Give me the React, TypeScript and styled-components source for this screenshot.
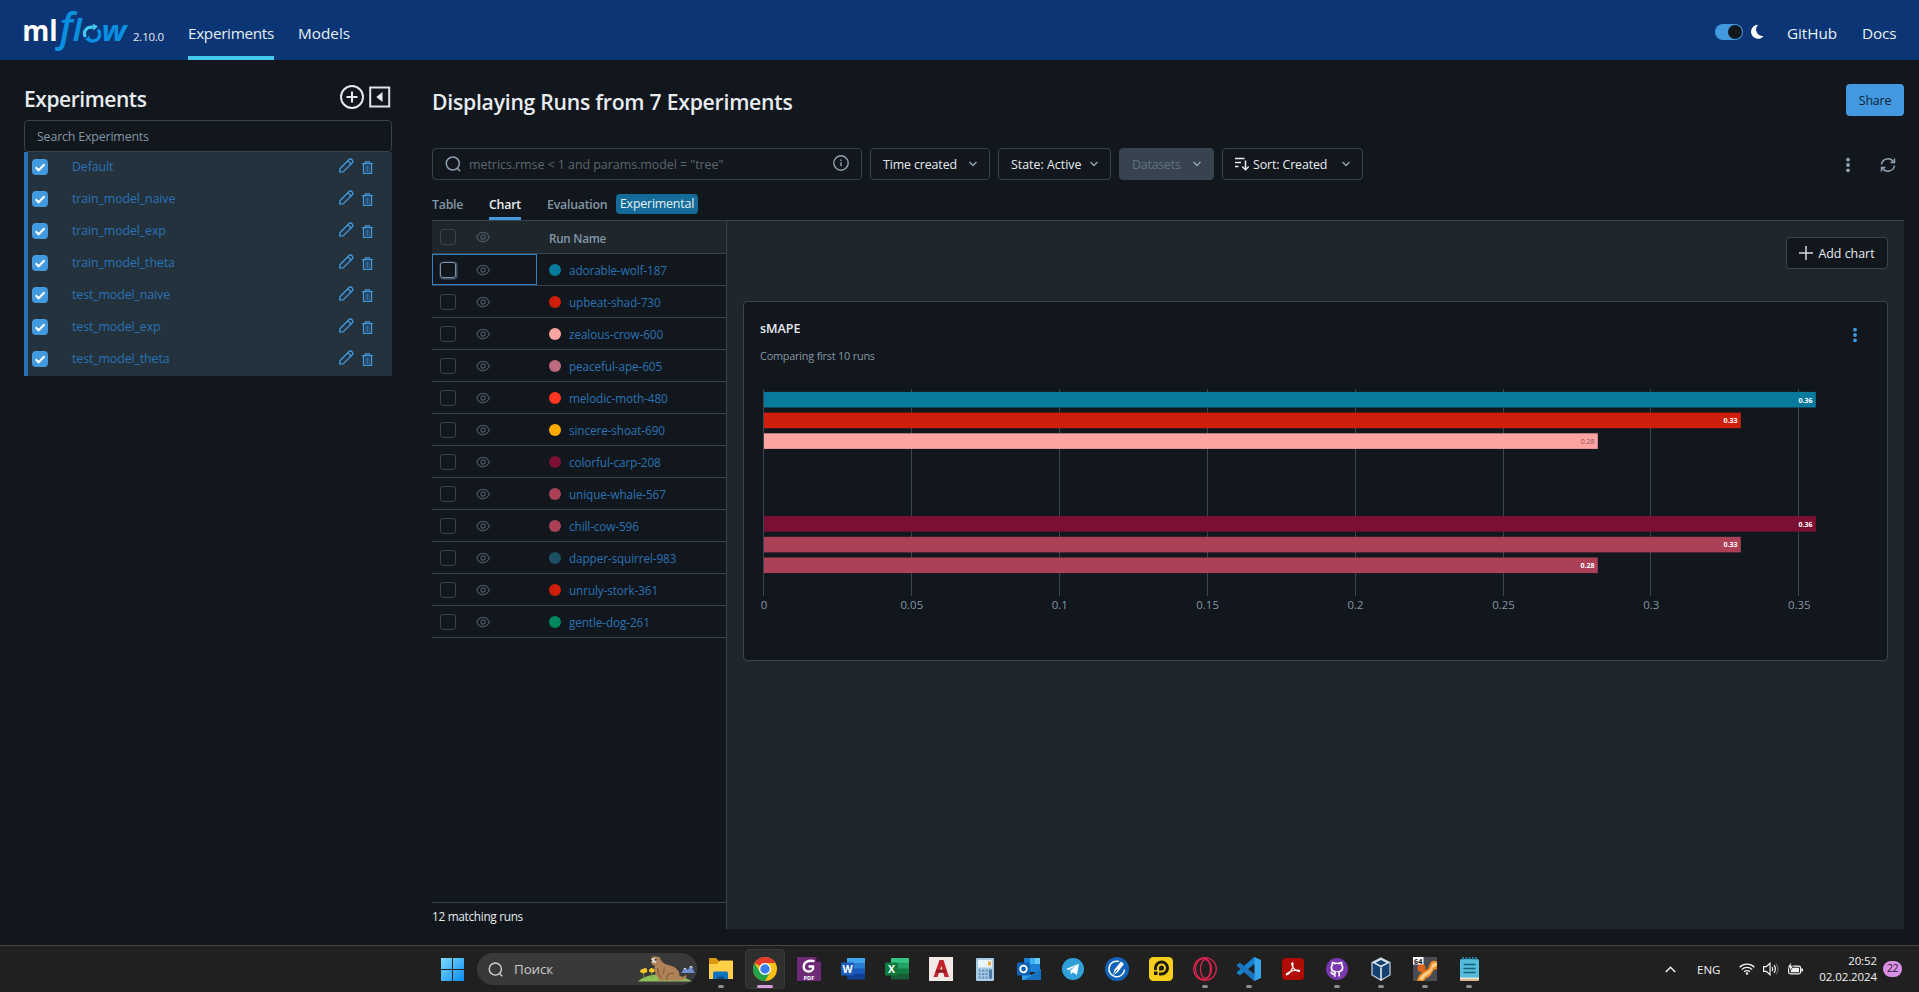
import React from 'react';
import styled, { createGlobalStyle, css } from 'styled-components';

const c = {
  page: '#11171c',
  panel: '#1f272d',
  border: '#37444f',
  nav: '#0b3574',
  link: '#2a72b5',
  blue: '#4299e0',
  muted: '#8396a5',
  text: '#e8ecf0',
};

const GlobalStyle = createGlobalStyle`
  * { box-sizing: border-box; }
  body { margin: 0; background: ${c.page}; overflow: hidden; }
  #root { font-family: "Open Sans", "Noto Sans", sans-serif; font-size: 12.4px; color: ${c.text}; }
  svg { display: block; flex: none; }
`;

const Screen = styled.div`
  width: 1919px;
  height: 992px;
  display: flex;
  flex-direction: column;
`;

/* ---------- top navigation ---------- */

const NavBar = styled.header`
  height: 60px;
  flex: none;
  background: ${c.nav};
  display: flex;
  align-items: stretch;
  padding: 0 23px 0 22px;
`;
const Version = styled.span`
  width: 32px;
  margin: 27px 23px 0 3px;
  font-size: 11.5px;
  line-height: 20px;
  letter-spacing: -0.23px;
  white-space: nowrap;
`;
const NavLink = styled.a<{ $active?: boolean; $track?: number; $width: number }>`
  width: ${(p) => p.$width}px;
  padding-top: 22px;
  line-height: 22px;
  font-size: 15.3px;
  letter-spacing: ${(p) => p.$track ?? 0}px;
  white-space: nowrap;
  color: #e6f1f5;
  border-bottom: 4px solid ${(p) => (p.$active ? '#43c9ed' : 'transparent')};
`;
const NavLinks = styled.nav`
  display: flex;
  gap: 24px;
`;
const NavRight = styled.div`
  margin-left: auto;
  display: flex;
  gap: 25px;
`;
const ThemeSwitch = styled.div`
  display: flex;
  gap: 8px;
  padding-top: 24px;
  margin-right: -2px;
`;
const Toggle = styled.span`
  width: 28px;
  height: 16px;
  border-radius: 8px;
  background: ${c.blue};
  display: flex;
  justify-content: flex-end;
  padding: 1px;
  &::after {
    content: '';
    width: 14px;
    height: 14px;
    border-radius: 50%;
    background: ${c.page};
  }
`;

/* ---------- page body ---------- */

const Body = styled.div`
  flex: 1;
  min-height: 0;
  display: flex;
  padding: 0 15px 0 24px;
`;
const Sidebar = styled.aside`
  width: 368px;
  margin-right: 40px;
  flex: none;
`;
const SidebarHead = styled.div`
  height: 60px;
  display: flex;
  align-items: flex-start;
  padding: 25px 1px 0 0;
  gap: 5px;
`;
const SidebarTitle = styled.h1`
  margin: 0 auto 0 0;
  font-size: 21px;
  line-height: 28px;
  font-weight: 600;
  letter-spacing: -0.45px;
`;
const SidebarSearch = styled.div`
  height: 32px;
  border: 1px solid ${c.border};
  border-radius: 4px;
  padding-left: 12px;
  line-height: 31px;
  letter-spacing: -0.17px;
  color: ${c.muted};
`;
const ExperimentList = styled.div`
  border-left: 4px solid #2272b4;
  background: #23323d;
`;
const ExperimentRow = styled.div`
  height: 32px;
  display: flex;
  align-items: center;
  padding: 0 19px 0 4px;
`;
const CheckedBox = styled.span`
  width: 16px;
  height: 16px;
  border-radius: 4px;
  background: ${c.blue};
  margin: 0 24px 2px 0;
`;
const ExperimentName = styled.a`
  flex: 1;
  line-height: 18px;
  padding-bottom: 3px;
  letter-spacing: -0.12px;
  color: ${c.link};
`;
const RowIcons = styled.span`
  display: flex;
  align-items: flex-end;
  gap: 8px;
  padding-bottom: 4px;
`;
const RaisedIcon = styled.span`
  padding-bottom: 1px;
`;

const Main = styled.main`
  flex: 1;
  min-width: 0;
  display: flex;
  flex-direction: column;
`;
const TitleRow = styled.div`
  height: 88px;
  flex: none;
  display: flex;
  justify-content: space-between;
  align-items: flex-start;
  padding-top: 24px;
`;
const Title = styled.h2`
  margin: 4px 0 0;
  font-size: 21.2px;
  line-height: 28px;
  font-weight: 600;
  letter-spacing: -0.25px;
`;
const ShareButton = styled.button`
  width: 58px;
  height: 32px;
  padding: 0;
  border: 0;
  border-radius: 4px;
  background: ${c.blue};
  color: #0f2233;
  font: inherit;
  letter-spacing: -0.18px;
`;
const Toolbar = styled.div`
  height: 32px;
  flex: none;
  display: flex;
  gap: 8px;
`;
const RunSearch = styled.div`
  width: 430px;
  flex: none;
  border: 1px solid ${c.border};
  border-radius: 4px;
  display: flex;
  align-items: center;
  padding: 0 12px;
  color: #5b666f;
  font-size: 12.5px;
  letter-spacing: -0.07px;
`;
const SearchHint = styled.span`
  flex: 1;
  margin-left: 8px;
`;
const FilterButton = styled.button<{ $width: number; $track?: number; $off?: boolean }>`
  width: ${(p) => p.$width}px;
  flex: none;
  padding: 0 11px 0 12px;
  border: 1px solid ${c.border};
  border-radius: 4px;
  background: transparent;
  color: ${c.text};
  font: inherit;
  font-size: 12.4px;
  letter-spacing: ${(p) => p.$track ?? 0}px;
  display: flex;
  align-items: center;
  justify-content: space-between;
  white-space: nowrap;
  ${(p) =>
    p.$off &&
    css`
      background: #37444f;
      color: #5f7281;
    `}
`;
const SortLabel = styled.span`
  display: flex;
  align-items: center;
  gap: 4px;
`;
const ToolbarEnd = styled.div`
  margin-left: auto;
  display: flex;
  align-items: center;
  gap: 30px;
  padding: 2px 8px 0 0;
`;
const Tabs = styled.div`
  height: 41px;
  flex: none;
  display: flex;
  align-items: flex-end;
  border-bottom: 1px solid ${c.border};
`;
const Tab = styled.div<{ $active?: boolean; $width: number }>`
  width: ${(p) => p.$width}px;
  height: 27px;
  margin-right: 26px;
  line-height: 23px;
  font-weight: 600;
  letter-spacing: -0.26px;
  white-space: nowrap;
  color: ${(p) => (p.$active ? c.text : c.muted)};
  border-bottom: 3px solid ${(p) => (p.$active ? c.blue : 'transparent')};
`;
const ExperimentalTag = styled.span`
  width: 82px;
  height: 20px;
  margin: 0 0 6px -18px;
  border-radius: 4px;
  background: #136c98;
  color: #e6f1f5;
  line-height: 20px;
  text-align: center;
  letter-spacing: -0.2px;
`;

/* ---------- runs table ---------- */

const Split = styled.div`
  flex: 1;
  min-height: 0;
  display: flex;
`;
const RunsPanel = styled.section`
  width: 295px;
  flex: none;
  display: flex;
  flex-direction: column;
  border-right: 1px solid ${c.border};
`;
const RunsHead = styled.div`
  height: 33px;
  flex: none;
  background: ${c.panel};
  border-bottom: 1px solid ${c.border};
  display: flex;
`;
const RunRow = styled.div`
  height: 32px;
  flex: none;
  border-bottom: 1px solid ${c.border};
  display: flex;
`;
const SelectCell = styled.div<{ $focused?: boolean }>`
  width: 105px;
  display: flex;
  align-items: center;
  gap: 20px;
  padding-left: 7px;
  border: 1px solid ${(p) => (p.$focused ? '#2f83c5' : 'transparent')};
`;
const EmptyBox = styled.span<{ $focused?: boolean }>`
  width: 16px;
  height: 16px;
  border-radius: 3px;
  border: 1px solid ${(p) => (p.$focused ? '#7d93a5' : c.border)};
  ${(p) => p.$focused && 'box-shadow: 0.5px 0.5px 0 1px #3f566a;'}
`;
const NameCell = styled.div`
  display: flex;
  align-items: center;
  padding-left: 12px;
  font-size: 11.8px;
  letter-spacing: -0.13px;
  color: ${c.link};
`;
const RunLabel = styled.a`
  padding-top: 1px;
`;
const NameHeader = styled.div`
  padding-left: 12px;
  line-height: 34px;
  font-size: 11.7px;
  font-weight: 600;
  letter-spacing: -0.27px;
  color: ${c.muted};
`;
const RunDot = styled.span<{ $color: string }>`
  width: 12px;
  height: 12px;
  margin: 0 8px 0 0;
  border-radius: 50%;
  background: ${(p) => p.$color};
`;
const RunsFooter = styled.div`
  margin-top: auto;
  height: 27px;
  border-top: 1px solid ${c.border};
  line-height: 27px;
  font-size: 11.8px;
  font-weight: 500;
  letter-spacing: -0.3px;
`;

/* ---------- chart area ---------- */

const ChartArea = styled.section`
  flex: 1;
  background: ${c.panel};
  padding: 16px 16px 0;
  display: flex;
  flex-direction: column;
`;
const AddChartButton = styled.button`
  align-self: flex-end;
  width: 102px;
  height: 32px;
  flex: none;
  margin-bottom: 32px;
  border: 1px solid ${c.border};
  border-radius: 4px;
  background: ${c.page};
  color: ${c.text};
  font: inherit;
  display: flex;
  align-items: center;
  justify-content: center;
  gap: 5px;
  padding: 0;
  white-space: nowrap;
`;
const ChartCard = styled.article`
  height: 360px;
  background: ${c.page};
  border: 1px solid ${c.border};
  border-radius: 4px;
  padding: 17px 30px 0 16px;
`;
const CardHead = styled.div`
  display: flex;
  justify-content: space-between;
  height: 57px;
`;
const CardTitle = styled.h3`
  margin: 0;
  font-size: 12.5px;
  line-height: 20px;
  font-weight: 600;
`;
const CardSubtitle = styled.div`
  margin-top: 8px;
  font-size: 10.9px;
  line-height: 18px;
  letter-spacing: -0.22px;
  color: ${c.muted};
`;
const MenuButton = styled.span`
  padding-top: 8px;
`;

/* ---------- task bar ---------- */

const PageFooterGap = styled.div`
  height: 16px;
  flex: none;
`;
const TaskBar = styled.footer`
  height: 47px;
  flex: none;
  display: grid;
  grid-template-columns: 441px 1fr auto;
  border-top: 1px solid #474541;
  background: #202020;
`;
const TaskIcons = styled.div`
  grid-column: 2;
  display: flex;
  align-items: center;
`;
const TaskSearch = styled.div`
  width: 220px;
  height: 32px;
  margin: 0 2px 0 13px;
  border-radius: 16px;
  background: #393939;
  display: flex;
  align-items: center;
  padding: 0 2px 0 11px;
  font-size: 13.4px;
  letter-spacing: -0.1px;
  color: #c9c9c9;
`;
const TaskSearchText = styled.span`
  margin: 0 auto 0 11px;
`;
const TaskSlot = styled.div<{ $active?: boolean }>`
  position: relative;
  width: 40px;
  height: 40px;
  margin: 0 2px;
  border-radius: 4px;
  display: flex;
  align-items: center;
  justify-content: center;
  ${(p) =>
    p.$active &&
    css`
      background: #2f2f2f;
      border: 1px solid #3a3a3a;
    `}
`;
const RunningMark = styled.span<{ $wide?: boolean }>`
  position: absolute;
  bottom: ${(p) => (p.$wide ? 0 : 1)}px;
  width: ${(p) => (p.$wide ? 16 : 6)}px;
  height: 3px;
  border-radius: 2px;
  background: ${(p) => (p.$wide ? '#d99be0' : '#8e8e8e')};
`;
const Tray = styled.div`
  display: flex;
  align-items: center;
  padding-right: 17px;
  font-size: 11.5px;
  color: #f2f2f2;
`;
const TrayLang = styled.span`
  width: 24px;
  margin: 1px 18px 0 21px;
`;
const TrayIcons = styled.div`
  display: flex;
  align-items: center;
  gap: 8px;
  margin-right: 15px;
`;
const Clock = styled.div`
  width: 59px;
  text-align: right;
  line-height: 16px;
  letter-spacing: -0.1px;
`;
const NoticeBadge = styled.span`
  width: 19px;
  height: 16px;
  margin-left: 6px;
  border-radius: 8px;
  background: #d98fe3;
  color: #2a1a2c;
  font-size: 10.5px;
  line-height: 15px;
  letter-spacing: -0.4px;
  text-align: center;
`;

/* ---------- icons ---------- */

const Logo = () => (
  <svg width="108" height="60" viewBox="0 0 108 60" fontFamily="Open Sans, sans-serif">
    <text x="0.2" y="41" fontSize="29" fontWeight="700" fill="#fff" textLength="35.5" lengthAdjust="spacingAndGlyphs">ml</text>
    <g fill="#0b8fe0" fontStyle="italic">
      <text x="37.500" y="40.500" fontSize="39" fontWeight="600">f</text>
      <text x="50.800" y="41" fontSize="30" fontWeight="700">l</text>
      <text x="79.500" y="41" fontSize="29" fontWeight="700" textLength="25" lengthAdjust="spacingAndGlyphs">w</text>
    </g>
    <path d="M75.800 29.500A6.500 6.500 0 0 1 66 39" fill="none" stroke="#0b8fe0" strokeWidth="3.400" />
    <path d="M63.400 37A6.500 6.500 0 0 1 71 27.500" fill="none" stroke="#43c9ed" strokeWidth="3.200" />
    <path d="m70.500 23.800 5.500 2.400-4.500 4.200Z" fill="#43c9ed" />
    <path d="m68.500 42-5.500-2.400 4.500-4.200Z" fill="#0b8fe0" />
  </svg>
);
const Moon = () => (
  <svg width="13" height="15" viewBox="0 0 13 15">
    <path d="M7.200.7A7 7 0 1 0 12.600 12 6.600 6.600 0 0 1 7.200.7Z" fill="#fff" />
  </svg>
);
const PlusCircle = () => (
  <svg width="24" height="24" viewBox="0 0 24 24" fill="none" stroke="#e8ecf0">
    <circle cx="12" cy="12" r="11" strokeWidth="1.900" />
    <path d="M12 6.500v11M6.500 12h11" strokeWidth="2" />
  </svg>
);
const CollapseBox = () => (
  <svg width="22" height="24" viewBox="0 0 22 24">
    <rect x="1.200" y="2.500" width="19" height="19" fill="none" stroke="#dfe3e7" strokeWidth="2" />
    <path d="M13.500 7v10L7.300 12Z" fill="#e8ecf0" />
  </svg>
);
const Check = () => (
  <svg width="16" height="16" viewBox="0 0 16 16">
    <path d="m3.600 8.200 3.100 3.100 5.800-6" fill="none" stroke="#fff" strokeWidth="2" />
  </svg>
);
const Pencil = () => (
  <svg width="15" height="15" viewBox="0 0 15 15" fill="none" stroke={c.blue} strokeWidth="1.400">
    <path d="M.9 14.100v-3.400l8.900-8.900a2 2 0 0 1 3.200 0 2 2 0 0 1 0 3.200l-8.900 8.900Z" />
    <path d="m9.300 3.200 2.800 2.800" />
  </svg>
);
const Trash = () => (
  <svg width="11" height="13" viewBox="0 0 11 13" fill="none" stroke={c.blue}>
    <path d="M0 2.700h11M3.300 2.500V.9h4.400v1.600" strokeWidth="1.200" />
    <path d="M1.500 3v9.300h8V3" strokeWidth="1.300" />
    <path d="M4 4.500v6.500M5.500 4.500v6.500M7 4.500v6.500" stroke="#3579b5" strokeWidth=".9" />
  </svg>
);
const Magnifier = ({ color = '#8fa1b0', size = 16 }: { color?: string; size?: number }) => (
  <svg width={size} height={size} viewBox="0 0 16 16" fill="none" stroke={color} strokeWidth="1.500">
    <circle cx="7.800" cy="7.500" r="6.500" />
    <path d="m12.200 12.200 3 3" />
  </svg>
);
const Info = () => (
  <svg width="16" height="18" viewBox="0 0 16 18" fill="none" stroke="#8fa1b0" strokeWidth="1.400">
    <circle cx="8" cy="8" r="7.200" />
    <path d="M8 7.300v4M8 4.600v1.500" />
  </svg>
);
const ChevronDown = () => (
  <svg width="10" height="6" viewBox="0 0 10 6" fill="none" stroke="#8fa1b0" strokeWidth="1.500">
    <path d="m1.500 1 3.500 3.500L8.500 1" />
  </svg>
);
const SortIcon = () => (
  <svg width="14" height="14" viewBox="0 0 14 14" fill="none" stroke={c.text} strokeWidth="1.500">
    <path d="M0 1.500h9.500M0 5.500h6M0 9.500h3.500M10.500 3.500v9M7.200 9.500l3.300 3.200 3.300-3.200" />
  </svg>
);
const Dots = ({ color }: { color: string }) => (
  <svg width="4" height="16" viewBox="0 0 4 16" fill={color}>
    <circle cx="2" cy="2.700" r="1.900" />
    <circle cx="2" cy="8" r="1.900" />
    <circle cx="2" cy="13.300" r="1.900" />
  </svg>
);
const Refresh = () => (
  <svg width="16" height="16" viewBox="0 0 16 16" fill="none" stroke="#8fa1b0" strokeWidth="1.500">
    <path d="M1.500 7.500A6.500 6.500 0 0 1 13.500 5M14.500 8.500A6.500 6.500 0 0 1 2.500 11" />
    <path d="M14.500 1.500V5.500h-4M1.500 14.500v-4h4" />
  </svg>
);
const Eye = () => (
  <svg width="14" height="12" viewBox="0 0 14 12" fill="none" stroke="#46545f" strokeWidth="1.300">
    <path d="M.7 6C3.300-.3 10.700-.3 13.300 6 10.700 12.300 3.300 12.300.7 6Z" />
    <circle cx="7" cy="6" r="2.100" />
  </svg>
);
const Plus = () => (
  <svg width="14" height="14" viewBox="0 0 14 14" stroke="#d3dae0" strokeWidth="1.500">
    <path d="M7 0v14M0 7h14" />
  </svg>
);

/* ---------- chart ---------- */

const bars = [
  { y: 16.5, width: 1053, color: '#077a9d', label: '0.36' },
  { y: 37.2, width: 978, color: '#cf1f0c', label: '0.33' },
  { y: 57.9, width: 835, color: '#fba4a2', label: '0.28', dim: true },
  { y: 140.7, width: 1053, color: '#7c1033', label: '0.36' },
  { y: 161.4, width: 978, color: '#ab4057', label: '0.33' },
  { y: 182.1, width: 835, color: '#ab4057', label: '0.28' },
];
const ticks = ['0', '0.05', '0.1', '0.15', '0.2', '0.25', '0.3', '0.35'];

const BarChart = () => (
  <svg width="1080" height="250" viewBox="0 0 1080 250" fontFamily="Open Sans, sans-serif">
    {ticks.map((t, i) => (
      <g key={t}>
        <rect x={Math.round(3.1 + i * 147.88)} y="13" width="1" height="207" fill="#3a4651" />
        <text x={4 + i * 147.88} y="232.500" fontSize="11.400" fill="#8396a5" textAnchor="middle">{t}</text>
      </g>
    ))}
    {bars.map((b) => (
      <g key={b.y}>
        <rect x="4" y={b.y - 0.6} width={b.width - 1.2} height="15.600" fill={b.color} />
        <text x={b.width - 0.5} y={b.y + 10} fontSize="7" fontWeight={b.dim ? 400 : 700} fill={b.dim ? '#8a5053' : '#fff'} textAnchor="end">{b.label}</text>
      </g>
    ))}
  </svg>
);

/* ---------- task bar icons ---------- */

const Windows = () => (
  <svg width="23" height="23" viewBox="0 0 23 23">
    <defs>
      <linearGradient id="win" x1="0" y1="0" x2="1" y2="1">
        <stop offset="0" stopColor="#7fdcff" />
        <stop offset="1" stopColor="#0a8cf0" />
      </linearGradient>
    </defs>
    <path d="M0 0h11v11H0zM12 0h11v11H12zM0 12h11v11H0zM12 12h11v11H12z" fill="url(#win)" />
  </svg>
);
const Marmot = () => (
  <svg width="57" height="26" viewBox="0 0 57 26">
    <path d="M0 25.500C8 18 24 17 34 19c9 1 15 3 20 6.500Z" fill="#8fbf5a" />
    <path d="m43 17 4-5 2.500 2 3.500-4 4 7Z" fill="#6f8fd0" />
    <path d="m45.500 13.500 1.500-1.500 1.500 1.200M51.500 11.500l1.500-1.500 1.500 2" stroke="#dfe8fa" fill="none" />
    <path d="M2 15.500q0-3 3-2.500 3-2 4 .5 1 3-2 3.500-4 1-5-1.500ZM11 14q2-3 4-1.500 2.500.5 1.500 3-2 2-4 .8Q10.500 16 11 14Z" fill="#f1c62b" />
    <path d="M5.500 17v4M13.500 17v4" stroke="#6d9a3c" />
    <path d="M13 3c.5-2.500 4-3.500 6.500-2 1.500-.8 2.500 0 2.500 1.500 2 4.500 5 5.500 10 7 7 2 10 6 9.500 11 3 1 5 0 6.500-2 1.500 3-1.500 6-6.500 6H22c-2.500 0-2.500-1.500-1-2.500-4-2-4.500-7-4.500-12.500-2-.5-3.500-1.500-3.500-4.500Z" fill="#b08257" />
    <path d="M19.500 12c0 5 2 8 3.500 10M29 24c-1-5 3-8 7-6.500M26 11c1 3 0 5-1 7" stroke="#876040" strokeWidth="1.200" fill="none" />
    <path d="M13 3.500c1.500-2 4-2 6-.5l-1 4c-2.500.5-4.500-.5-5-3.500Z" fill="#d9cdc4" />
    <circle cx="17.800" cy="3.800" r="1" fill="#222" />
    <circle cx="13.200" cy="4.500" r=".8" fill="#222" />
  </svg>
);
const Explorer = () => (
  <svg width="24" height="24" viewBox="0 0 24 24">
    <path d="M0 2q0-1 1-1h6l3 3v6H0Z" fill="#d99a0b" />
    <path d="M0 7h8l3-3.500h12q1 0 1 1V22H0Z" fill="#ffcf48" />
    <path d="M4 22v-6q0-1.500 1.500-1.500h12q1.500 0 1.500 1.500v6Z" fill="#1173bd" />
    <path d="M8 22v-2.500h7V22Z" fill="#0a4f8c" />
  </svg>
);
const Chrome = () => (
  <svg width="24" height="24" viewBox="0 0 24 24">
    <circle cx="12" cy="12" r="12" fill="#fbc116" />
    <path d="M12 12 1.600 6A12 12 0 0 1 22.400 6H12Z" fill="#e33b2e" />
    <path d="M1.600 6A12 12 0 0 0 12 24l5.200-9H6.800Z" fill="#25a34a" />
    <circle cx="12" cy="12" r="6" fill="#fff" />
    <circle cx="12" cy="12" r="4.700" fill="#3a7df0" />
  </svg>
);
const FoxitPdf = () => (
  <svg width="24" height="24" viewBox="0 0 24 24">
    <path d="M0 0h19l5 5v19H0Z" fill="#6f2a76" />
    <path d="M19 0v5h5Z" fill="#3f1744" />
    <path d="M17.500 4.200c-6.500-1.500-10.800 1-10.800 5.500 0 5 6.800 6.500 9.300 2.300V9.500h-4.500" fill="none" stroke="#fff" strokeWidth="2.400" />
    <text x="12" y="22.500" fontSize="5.800" fontWeight="700" fill="#fff" textAnchor="middle">PDF</text>
  </svg>
);
const OfficeIcon = ({ letter, shades }: { letter: string; shades: string[] }) => (
  <svg width="24" height="22" viewBox="0 0 24 22">
    {shades.slice(0, 4).map((s, i) => (
      <rect key={s} x="6" y={i * 5.3} width="18" height="5.600" fill={s} />
    ))}
    <rect y="4.500" width="13" height="13" rx="1" fill={shades[4]} />
    <text x="6.500" y="14.700" fontSize="10.500" fontWeight="700" fill="#fff" textAnchor="middle">{letter}</text>
  </svg>
);
const AutoCad = () => (
  <svg width="24" height="24" viewBox="0 0 24 24">
    <rect width="24" height="24" fill="#f3e9e6" />
    <path d="M4.500 20 10.500 3h4L20 20h-4.500l-3-11-4 11Z" fill="#c2262c" />
    <path d="M7.500 12.500h9v3.200h-10Z" fill="#8f1a20" />
  </svg>
);
const Calculator = () => (
  <svg width="18" height="23" viewBox="0 0 18 23">
    <rect width="18" height="23" rx="1" fill="#a9cbe6" />
    <rect x="2" y="2" width="14" height="7.500" fill="#e9f3fa" />
    <path d="M12 3.500h3v4h-3Z" fill="#e6a93a" />
    <g fill="#6d97bf">
      {[11.5, 15, 18.5].map((y) =>
        [2.5, 6, 9.5].map((x) => <rect key={`${x}-${y}`} x={x} y={y} width="2.300" height="2.200" />),
      )}
    </g>
    <rect x="13" y="11.500" width="3" height="9.200" fill="#4b79a5" />
  </svg>
);
const Outlook = () => (
  <svg width="24" height="22" viewBox="0 0 24 22">
    <path d="M7 0h16v14H7Z" fill="#1b7fd6" />
    <path d="M13 0h5v6h-5Z" fill="#3fb0f0" />
    <path d="M18 0h5v6h-5Z" fill="#68ccfa" />
    <path d="M5 11l9.500 6L24 11v11H5Z" fill="#2c9fe8" />
    <path d="m24 11-17 11h17Z" fill="#1673c4" />
    <rect y="4.500" width="13" height="13" rx="1" fill="#0f63b5" />
    <circle cx="6.500" cy="11" r="3.300" fill="none" stroke="#fff" strokeWidth="1.800" />
  </svg>
);
const Telegram = () => (
  <svg width="22" height="22" viewBox="0 0 22 22">
    <circle cx="11" cy="11" r="11" fill="#31a0d8" />
    <path d="M4 11 17 5.700 14.900 17l-4-2.800-2 2-.6-3.700 5.500-4.700-7 4.200Z" fill="#fff" />
  </svg>
);
const SignApp = () => (
  <svg width="24" height="24" viewBox="0 0 24 24">
    <circle cx="12" cy="12" r="12" fill="#1162b8" />
    <path d="M14 4.500a7.800 7.800 0 1 0 5.500 8" fill="none" stroke="#fff" strokeWidth="1.500" />
    <path d="m8 18 1.500-5.500 6.500-8 3 2.500-6.500 8.500Z" fill="#fff" />
    <path d="m8.500 17.300 4-5" stroke="#1162b8" />
  </svg>
);
const PlayerIcon = () => (
  <svg width="24" height="24" viewBox="0 0 24 24">
    <rect width="24" height="24" rx="4.500" fill="#f7cf1b" />
    <path d="M6.500 13v-2a6 6 0 1 1 6 6H10" fill="none" stroke="#1d1b12" strokeWidth="3" />
    <path d="M5 14.500h3.500V18H5Z" fill="#1d1b12" />
    <path d="M10 13.500V11a2.500 2.500 0 1 1 2.500 2.500Z" fill="#1d1b12" />
  </svg>
);
const OperaGx = () => (
  <svg width="24" height="24" viewBox="0 0 24 24" fill="none" stroke="#dd2450" strokeWidth="1.300">
    <circle cx="12" cy="12" r="11.300" />
    <ellipse cx="10.500" cy="12" rx="8" ry="10.500" />
    <ellipse cx="12.500" cy="12" rx="5" ry="9.300" />
  </svg>
);
const VsCode = () => (
  <svg width="24" height="24" viewBox="0 0 24 24">
    <path d="M18 0v6.500L3 18.200 0 16.500V15L16.500.5Z" fill="#1681cc" />
    <path d="M18 24v-6.500L3 5.800 0 7.500V9l16.500 14.500Z" fill="#1c75bb" />
    <path d="m17.500 0 6.500 3v18l-6.500 3Z" fill="#34a5ee" />
  </svg>
);
const Acrobat = () => (
  <svg width="22" height="22" viewBox="0 0 22 22">
    <rect width="22" height="22" rx="4" fill="#ae0c04" />
    <path d="M5 16.800c3-1 6.500-7 6-11.300 0-1-1.300-1-1.300.2.300 3.500 3.800 7.800 7 7.800 1.200 0 1.200-1.200 0-1.300-4-.2-9 1.300-12 3.500-.8.700-.3 1.300.3 1.100Z" fill="none" stroke="#fff" strokeWidth="1.200" />
  </svg>
);
const GitHubDesktop = () => (
  <svg width="22" height="22" viewBox="0 0 22 22">
    <circle cx="11" cy="11" r="11" fill="#7a37ad" />
    <path d="M8.800 18.700v-2.400c-2.800.4-2.800-1.800-4.300-2.200M8.800 18.500v-3.200c0-.6.200-1.100.6-1.500-2.500-.3-4-1.500-4-4.300 0-1 .4-1.900 1-2.500-.3-.9-.2-1.700.1-2.500 1 0 1.800.5 2.500 1a9 9 0 0 1 4 0c.700-.5 1.500-1 2.500-1 .3.800.4 1.600.1 2.500.6.600 1 1.500 1 2.500 0 2.800-1.500 4-4 4.300.4.400.6.900.6 1.500v3.200" fill="none" stroke="#fff" strokeWidth="1.700" />
  </svg>
);
const VirtualBox = () => (
  <svg width="20" height="24" viewBox="0 0 20 24">
    <path d="m10 1 9 4.500v12.500L10 23.200 1 18V5.500Z" fill="#16406f" stroke="#c6d6e6" strokeWidth="1.200" />
    <path d="m10 1 9 4.500-9 5-9-5Z" fill="#d5e1ec" />
    <path d="m10 3 5.500 2.700L10 8.500 4.500 5.700Z" fill="#16406f" />
    <path d="M10 10.500v12.700" stroke="#e4edf5" strokeWidth="1.600" />
  </svg>
);
const Sixty4 = () => (
  <svg width="24" height="24" viewBox="0 0 24 24">
    <rect width="24" height="24" fill="#4a4c54" />
    <path d="M4 24c1-6 5-9 9-11s3-6 5-8 4-1 6-1v8c-5 0-4 4-7 7-3 2-5 2-6 5Z" fill="#f08a24" />
    <path d="M6 23c2-5 5-7 9-9s3-6 5-7.500 2-.5 4-.5v3c-5 0-4 4-7 7s-6 3-7 7Z" fill="#ffd08a" />
    <circle cx="8.500" cy="11" r="4" fill="#e0621a" />
    <rect width="10.500" height="7.500" fill="#fff" />
    <text x="5.200" y="6.500" fontSize="7.300" fontWeight="700" fill="#111" textAnchor="middle">64</text>
  </svg>
);
const Notepad = () => (
  <svg width="19" height="24" viewBox="0 0 19 24">
    <rect y="2" width="19" height="20" rx="1.500" fill="#55bddb" />
    <path d="M0 20.500h19V22.500q0 1.500-1.500 1.500h-16Q0 24 0 22.500Z" fill="#e9e4dc" />
    <path d="M.5 23h18" stroke="#d98a3b" />
    <path d="M3 0v3M6.300 0v3M9.500 0v3M12.800 0v3M16 0v3" stroke="#2b8fb5" strokeWidth="1.500" />
    <path d="M3.500 7.500h12M3.500 11.500h12M3.500 15.500h12" stroke="#16607c" strokeWidth="1.600" />
  </svg>
);

const ChevronUp = () => (
  <svg width="11" height="7" viewBox="0 0 11 7" fill="none" stroke="#f2f2f2" strokeWidth="1.500">
    <path d="M.8 6 5.500 1.300 10.200 6" />
  </svg>
);
const Wifi = () => (
  <svg width="16" height="12" viewBox="0 0 16 12" fill="none" stroke="#f2f2f2" strokeWidth="1.300">
    <path d="M.6 4.300a10.400 10.400 0 0 1 14.800 0M2.800 6.600a7.300 7.300 0 0 1 10.400 0M5 8.900a4.200 4.200 0 0 1 6 0" />
    <circle cx="8" cy="10.500" r="1.200" fill="#f2f2f2" stroke="none" />
  </svg>
);
const Speaker = () => (
  <svg width="16" height="14" viewBox="0 0 16 14" fill="none" stroke="#f2f2f2" strokeWidth="1.200">
    <path d="M.6 4.700h2.700L7 1.200v11.600L3.300 9.300H.6ZM9 5q1.300 2 0 4M11 3.200q2.800 3.800 0 7.600" />
    <path d="M13 1.500q4 5.500 0 11" stroke="#666" />
  </svg>
);
const Battery = () => (
  <svg width="16" height="14" viewBox="0 0 16 14">
    <rect x="1.600" y="4.100" width="12" height="7.800" rx="1.800" fill="none" stroke="#f2f2f2" strokeWidth="1.200" />
    <path d="M4.500 5.700h7.500v4.600H3.500Z" fill="#f2f2f2" />
    <path d="M14.300 6.500H16v3h-1.700Z" fill="#f2f2f2" />
    <path d="M4 0 .3 5.800h2.400v3.800L6.500 4H4.300Z" fill="#f2f2f2" stroke="#202020" strokeWidth=".7" />
  </svg>
);

const apps: { icon: React.ReactNode; running?: boolean; active?: boolean }[] = [
  { icon: <Explorer />, running: true },
  { icon: <Chrome />, active: true },
  { icon: <FoxitPdf /> },
  { icon: <OfficeIcon letter="W" shades={['#41a5ee', '#2b7cd3', '#185abd', '#103f91', '#1a5dbe']} /> },
  { icon: <OfficeIcon letter="X" shades={['#33c481', '#21a366', '#107c41', '#185c37', '#0f7a40']} /> },
  { icon: <AutoCad /> },
  { icon: <Calculator /> },
  { icon: <Outlook /> },
  { icon: <Telegram /> },
  { icon: <SignApp /> },
  { icon: <PlayerIcon /> },
  { icon: <OperaGx />, running: true },
  { icon: <VsCode />, running: true },
  { icon: <Acrobat /> },
  { icon: <GitHubDesktop />, running: true },
  { icon: <VirtualBox />, running: true },
  { icon: <Sixty4 />, running: true },
  { icon: <Notepad />, running: true },
];

const experiments = [
  'Default',
  'train_model_naive',
  'train_model_exp',
  'train_model_theta',
  'test_model_naive',
  'test_model_exp',
  'test_model_theta',
];

const runs: [string, string][] = [
  ['adorable-wolf-187', '#077a9d'],
  ['upbeat-shad-730', '#cf1f0c'],
  ['zealous-crow-600', '#fba4a2'],
  ['peaceful-ape-605', '#bc6a7c'],
  ['melodic-moth-480', '#ff3621'],
  ['sincere-shoat-690', '#ffab00'],
  ['colorful-carp-208', '#7c1033'],
  ['unique-whale-567', '#ab4057'],
  ['chill-cow-596', '#ab4057'],
  ['dapper-squirrel-983', '#1b5162'],
  ['unruly-stork-361', '#cf1f0c'],
  ['gentle-dog-261', '#00875c'],
];

export default function App() {
  return (
    <Screen>
      <GlobalStyle />
      <NavBar>
        <Logo />
        <Version>2.10.0</Version>
        <NavLinks>
          <NavLink $active $width={86} $track={-0.32}>Experiments</NavLink>
          <NavLink $width={52}>Models</NavLink>
        </NavLinks>
        <NavRight>
          <ThemeSwitch>
            <Toggle />
            <Moon />
          </ThemeSwitch>
          <NavLink $width={50} $track={-0.08}>GitHub</NavLink>
          <NavLink $width={34} $track={-0.1}>Docs</NavLink>
        </NavRight>
      </NavBar>

      <Body>
        <Sidebar>
          <SidebarHead>
            <SidebarTitle>Experiments</SidebarTitle>
            <PlusCircle />
            <CollapseBox />
          </SidebarHead>
          <SidebarSearch>Search Experiments</SidebarSearch>
          <ExperimentList>
            {experiments.map((name) => (
              <ExperimentRow key={name}>
                <CheckedBox><Check /></CheckedBox>
                <ExperimentName>{name}</ExperimentName>
                <RowIcons>
                  <RaisedIcon><Pencil /></RaisedIcon>
                  <Trash />
                </RowIcons>
              </ExperimentRow>
            ))}
          </ExperimentList>
        </Sidebar>

        <Main>
          <TitleRow>
            <Title>Displaying Runs from 7 Experiments</Title>
            <ShareButton>Share</ShareButton>
          </TitleRow>
          <Toolbar>
            <RunSearch>
              <Magnifier />
              <SearchHint>metrics.rmse &lt; 1 and params.model = "tree"</SearchHint>
              <Info />
            </RunSearch>
            <FilterButton $width={120} $track={-0.12}>Time created<ChevronDown /></FilterButton>
            <FilterButton $width={113} $track={0}>State: Active<ChevronDown /></FilterButton>
            <FilterButton $width={95} $track={-0.22} $off>Datasets<ChevronDown /></FilterButton>
            <FilterButton $width={141} $track={-0.12}>
              <SortLabel><SortIcon />Sort: Created</SortLabel>
              <ChevronDown />
            </FilterButton>
            <ToolbarEnd>
              <Dots color="#8fa1b0" />
              <Refresh />
            </ToolbarEnd>
          </Toolbar>
          <Tabs>
            <Tab $width={31}>Table</Tab>
            <Tab $width={32} $active>Chart</Tab>
            <Tab $width={61}>Evaluation</Tab>
            <ExperimentalTag>Experimental</ExperimentalTag>
          </Tabs>

          <Split>
            <RunsPanel>
              <RunsHead>
                <SelectCell><EmptyBox /><Eye /></SelectCell>
                <NameHeader>Run Name</NameHeader>
              </RunsHead>
              {runs.map(([name, color], i) => (
                <RunRow key={name}>
                  <SelectCell $focused={i === 0}>
                    <EmptyBox $focused={i === 0} />
                    <Eye />
                  </SelectCell>
                  <NameCell>
                    <RunDot $color={color} />
                    <RunLabel>{name}</RunLabel>
                  </NameCell>
                </RunRow>
              ))}
              <RunsFooter>12 matching runs</RunsFooter>
            </RunsPanel>

            <ChartArea>
              <AddChartButton><Plus />Add chart</AddChartButton>
              <ChartCard>
                <CardHead>
                  <div>
                    <CardTitle>sMAPE</CardTitle>
                    <CardSubtitle>Comparing first 10 runs</CardSubtitle>
                  </div>
                  <MenuButton><Dots color={c.blue} /></MenuButton>
                </CardHead>
                <BarChart />
              </ChartCard>
            </ChartArea>
          </Split>
        </Main>
      </Body>
      <PageFooterGap />

      <TaskBar>
        <TaskIcons>
          <Windows />
          <TaskSearch>
            <Magnifier color="#d0d0d0" size={15} />
            <TaskSearchText>Поиск</TaskSearchText>
            <Marmot />
          </TaskSearch>
          {apps.map((app, i) => (
            <TaskSlot key={i} $active={app.active}>
              {app.icon}
              {(app.running || app.active) && <RunningMark $wide={app.active} />}
            </TaskSlot>
          ))}
        </TaskIcons>
        <Tray>
          <ChevronUp />
          <TrayLang>ENG</TrayLang>
          <TrayIcons>
            <Wifi />
            <Speaker />
            <Battery />
          </TrayIcons>
          <Clock>20:52<br />02.02.2024</Clock>
          <NoticeBadge>22</NoticeBadge>
        </Tray>
      </TaskBar>
    </Screen>
  );
}
